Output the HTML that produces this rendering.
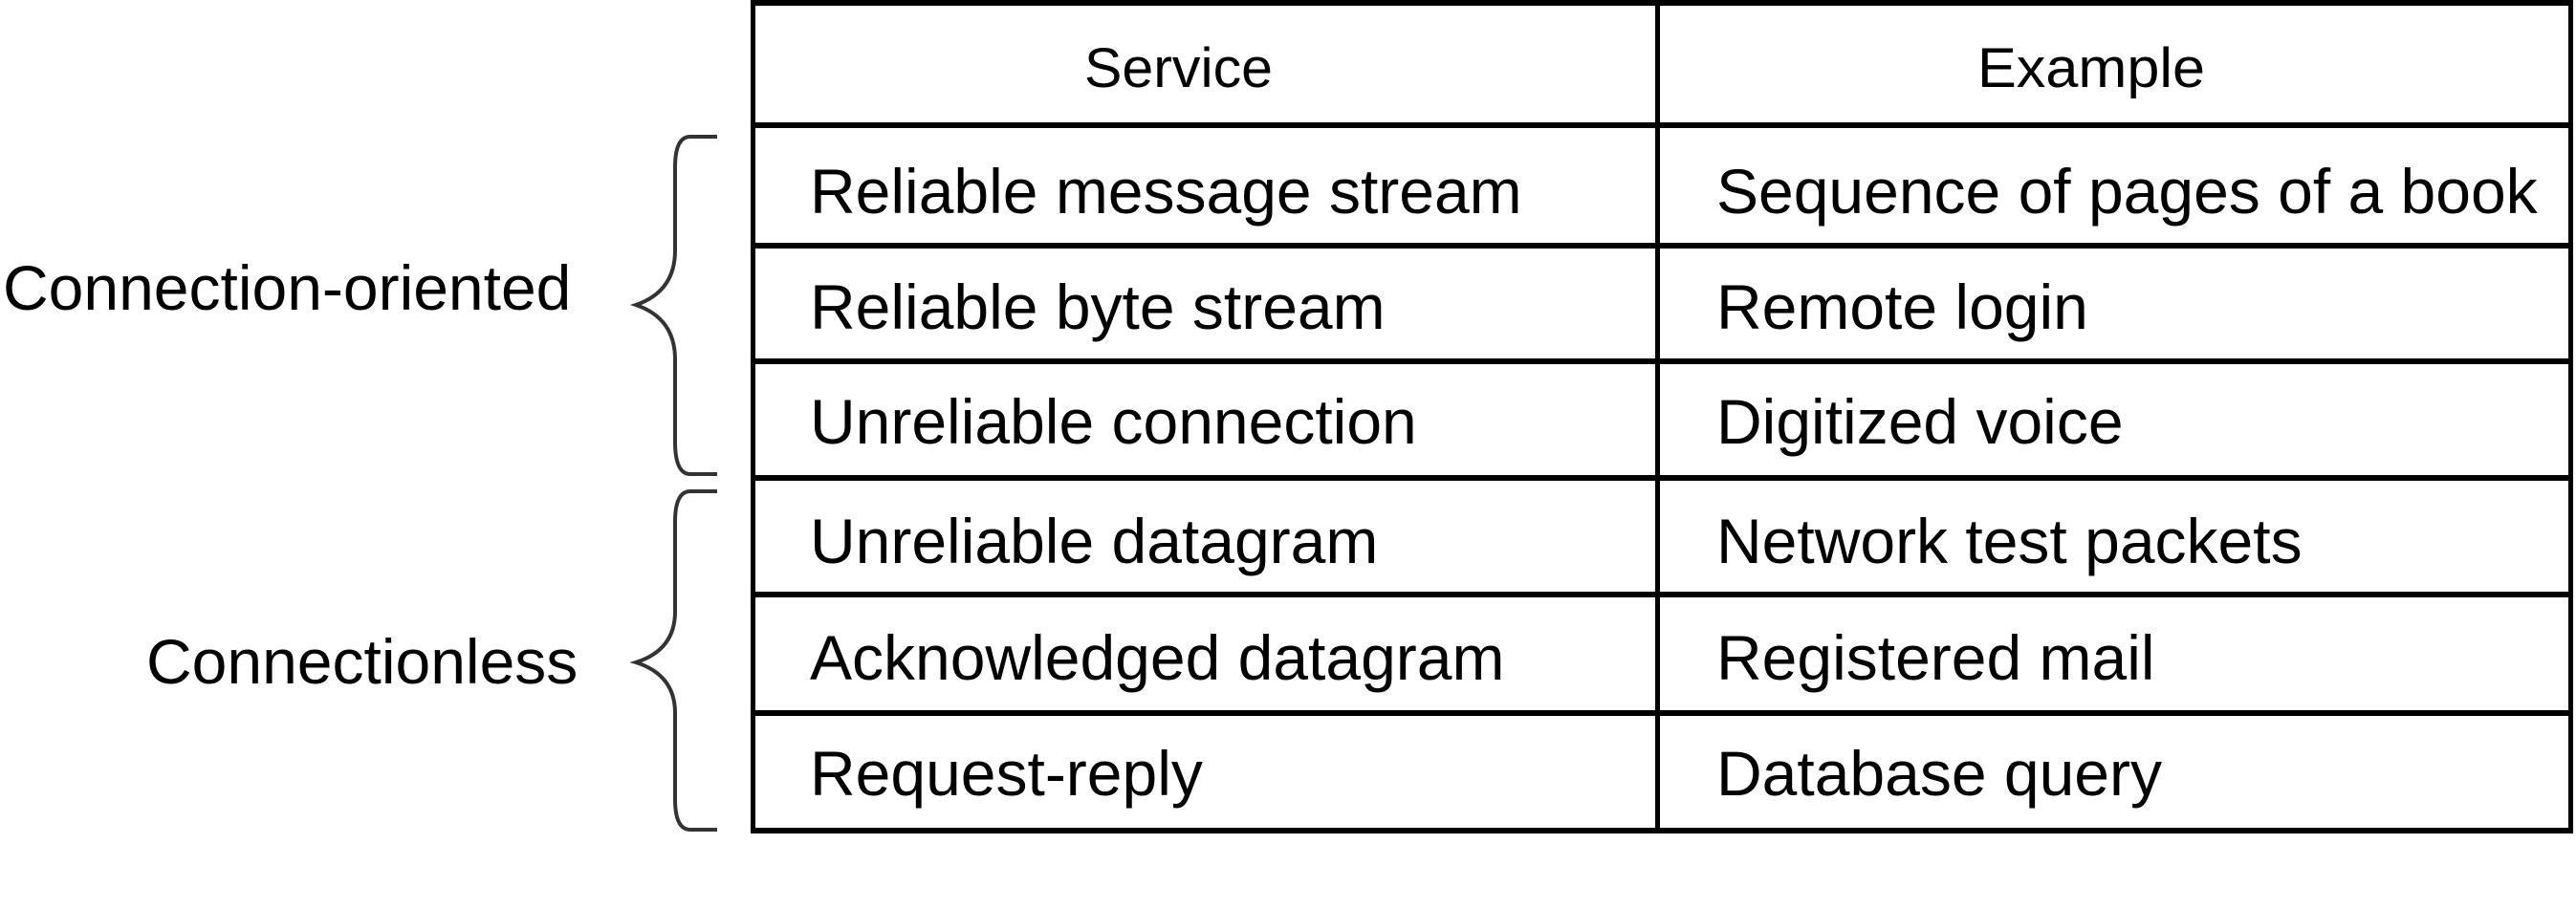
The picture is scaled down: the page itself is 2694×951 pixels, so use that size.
<!DOCTYPE html>
<html><head><meta charset="utf-8"><style>
html,body{margin:0;padding:0;background:#fff;width:2694px;height:951px;overflow:hidden}
text{font-family:"Liberation Sans",Arial,sans-serif;fill:#000}
</style></head><body>
<svg width="2694" height="951" viewBox="0 0 2694 951" xmlns="http://www.w3.org/2000/svg">
<g fill="#000">
<rect x="785" y="0" width="1906" height="6"/>
<rect x="785" y="128" width="1906" height="6"/>
<rect x="785" y="254" width="1906" height="6"/>
<rect x="785" y="375" width="1906" height="6"/>
<rect x="785" y="497" width="1906" height="6"/>
<rect x="785" y="619" width="1906" height="6"/>
<rect x="785" y="743" width="1906" height="6"/>
<rect x="785" y="866" width="1906" height="6"/>
<rect x="785" y="0" width="5" height="872"/>
<rect x="1731" y="0" width="5" height="872"/>
<rect x="2686" y="0" width="5" height="872"/>
</g>
<g fill="none" stroke="#333" stroke-width="4">
<path d="M750 143 H722 Q706 143 706 175 V262 Q706 305 665 319 Q706 333 706 376 V462 Q706 496 722 496 H750"/>
<path d="M750 514 H722 Q706 514 706 546 V640 Q706 680 665 693 Q706 706 706 746 V836 Q706 868 722 868 H750"/>
</g>
<text x="1134" y="91" font-size="58" textLength="197" lengthAdjust="spacingAndGlyphs">Service</text>
<text x="2068" y="91" font-size="58" textLength="238" lengthAdjust="spacingAndGlyphs">Example</text>
<text x="3" y="324" font-size="66">Connection-oriented</text>
<text x="153" y="715" font-size="66">Connectionless</text>
<g font-size="66">
<text x="847" y="223">Reliable message stream</text>
<text x="847" y="344">Reliable byte stream</text>
<text x="847" y="464">Unreliable connection</text>
<text x="847" y="589">Unreliable datagram</text>
<text x="847" y="711">Acknowledged datagram</text>
<text x="847" y="832">Request-reply</text>
<text x="1795" y="223">Sequence of pages of a book</text>
<text x="1795" y="344">Remote login</text>
<text x="1795" y="464">Digitized voice</text>
<text x="1795" y="589">Network test packets</text>
<text x="1795" y="711">Registered mail</text>
<text x="1795" y="832">Database query</text>
</g>
</svg>
</body></html>
